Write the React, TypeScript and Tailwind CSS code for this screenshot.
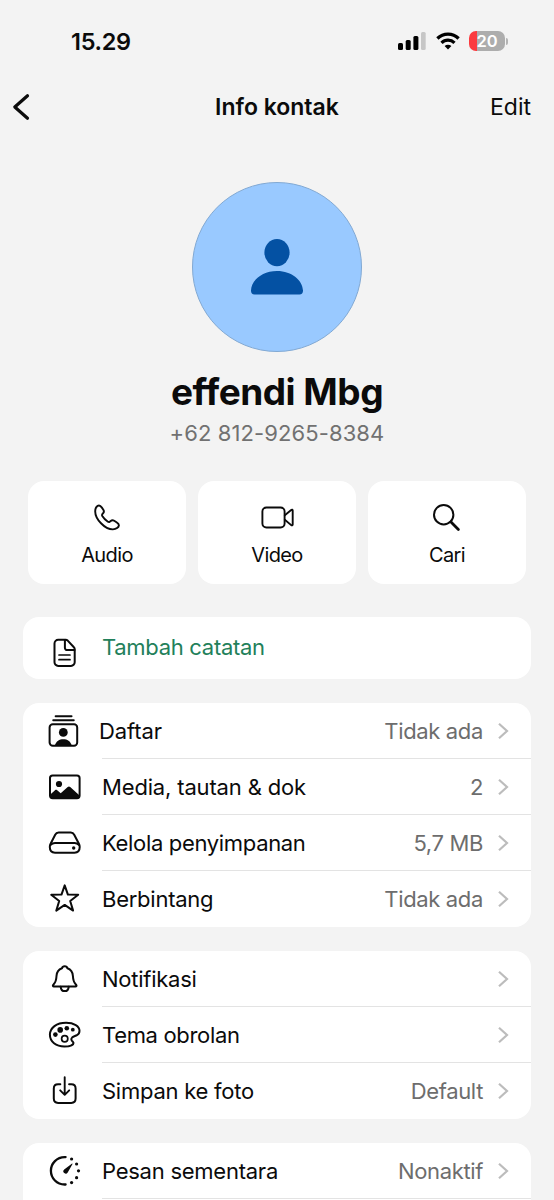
import type { ReactNode } from "react";

type Row = {
  label: string;
  value?: string;
  icon: ReactNode;
  labelClass?: string;
};

function Icon({ children, className = "" }: { children: ReactNode; className?: string }) {
  return (
    <svg
      className={`size-9 shrink-0 ${className}`}
      viewBox="0 0 36 36"
      fill="none"
      stroke="currentColor"
      strokeWidth={2}
      strokeLinecap="round"
      strokeLinejoin="round"
    >
      {children}
    </svg>
  );
}

const PhoneIcon = () => (
  <Icon>
    <path
      strokeWidth={1.9}
      d="M6.2 11.4C6.2 7.800 8 5.500 10 5.500c1.300 0 2 .8 2.900 2.100l1.400 2.100c.9 1.300.8 2.300-.1 3.400l-.9 1.100c-.4.6-.4 1.100 0 1.800 1.400 2.300 3.400 4.300 5.600 5.700.7.4 1.300.4 1.800 0l1-.8c1.100-.9 2.200-1 3.500-.2l2.300 1.500c1.700 1.100 2.500 1.900 2.400 3.100-.2 2-2.600 4.100-6 4.100C15.800 29.400 6.200 19 6.200 11.400Z"
    />
  </Icon>
);

const VideoIcon = () => (
  <Icon>
    <g strokeWidth={1.9}>
      <rect x="3.400" y="7.500" width="22.200" height="20" rx="4" />
      <path d="M25.800 15.200 32.200 9.900c.7-.6 1.500-.2 1.500.7v13.800c0 .9-.8 1.300-1.500.7l-6.400-5.300" />
    </g>
  </Icon>
);

const SearchIcon = () => (
  <Icon>
    <circle cx="14.700" cy="14.700" r="9.700" />
    <path strokeWidth={2.800} d="m22 22 7.400 7.400" />
  </Icon>
);

const NoteIcon = () => (
  <Icon className="mt-2.5">
    <path d="M12.200 4.800h7.500c.8 0 1.400.3 2 .8l6.200 6.700c.6.600.8 1.200.8 2v12.900a3.700 3.700 0 0 1-3.700 3.700H12.200a3.700 3.700 0 0 1-3.700-3.700V8.500a3.700 3.700 0 0 1 3.700-3.700Z" />
    <path d="M18.900 5v7.800a2.300 2.300 0 0 0 2.300 2.300h7.300" />
    <path strokeWidth={1.700} d="M13 20h11M13 24.700h11" />
  </Icon>
);

const ListIcon = () => (
  <Icon>
    <path strokeWidth={1.900} d="M9.600 3.300h16M7.200 7.200h20.600" />
    <rect x="3.600" y="11.200" width="27.600" height="21.600" rx="3.200" />
    <circle cx="17.300" cy="19.400" r="4.400" fill="currentColor" stroke="none" />
    <path d="M8.800 32.500c1.400-4.300 4.500-6.200 8.500-6.200s7.100 1.900 8.500 6.200Z" fill="currentColor" stroke="none" />
  </Icon>
);

const MediaIcon = () => (
  <Icon>
    <rect x="4" y="6.500" width="29.600" height="22.700" rx="2.600" />
    <circle cx="13" cy="15" r="3.100" fill="currentColor" stroke="none" />
    <path
      d="M4.300 25.600 9 21.200c.7-.6 1.500-.6 2.200 0l3.500 3 7-6.100c.8-.7 1.700-.7 2.500 0l9.100 8.100v1.300c0 1-.6 1.700-1.700 1.700H6c-1 0-1.700-.7-1.700-1.700Z"
      fill="currentColor"
      stroke="none"
    />
  </Icon>
);

const StorageIcon = () => (
  <Icon>
    <path d="M12.600 7.600h12.200c1.600 0 2.700.7 3.400 2.100l4.700 9.100c.5 1 .8 2 .8 3.300 0 3.600-1.700 5.600-5.200 5.600H9c-3.500 0-5.200-2-5.200-5.600 0-1.300.3-2.300.8-3.300l4.600-9.100c.7-1.400 1.800-2.100 3.400-2.100Z" />
    <path strokeWidth={1.800} d="M4.700 20c1-1.300 2.400-2 4.300-2h19.500c1.900 0 3.300.7 4.300 2" />
    <circle cx="27.700" cy="23" r="1.700" fill="currentColor" stroke="none" />
  </Icon>
);

const StarIcon = () => (
  <Icon>
    <path d="m18.700 4.400 3.200 9.200 10.300.2-8 6.200 2.900 9.600-8.400-5.700-8.400 5.700 2.900-9.600-8-6.200 10.300-.2Z" />
  </Icon>
);

const BellIcon = () => (
  <Icon>
    <path d="M18.700 5.200c1.500 0 2.400.8 2.700 2.100 3.500 1.200 5.300 4 5.500 7.700.2 4.200.7 6.100 2.800 8.300l.6.700c.5.700.1 1.400-.7 1.400H7.800c-.8 0-1.200-.7-.7-1.400l.6-.7c2.100-2.200 2.600-4.100 2.800-8.300.2-3.700 2-6.500 5.500-7.700.3-1.300 1.200-2.100 2.700-2.100Z" />
    <path d="M14.700 25.800c.2 2.500 1.700 4.300 4 4.300s3.800-1.800 4-4.300" />
  </Icon>
);

const PaletteIcon = () => (
  <Icon>
    <path d="M26 20.600c1.100-1.400 3.200-1.500 5-2.500 1.800-.9 2.500-2.400 2.500-4.300 0-4.700-5.500-8-13.400-8C10.600 5.800 3.900 10.600 3.900 17.800c0 6.900 6.100 11.700 14.500 11.700 4.900 0 9.100-1.300 9.100-3.400 0-1.100-1.100-1.500-1.800-2.600-.6-1-.5-2.100.3-2.900Z" />
    <circle cx="18.700" cy="21.700" r="3.100" strokeWidth={1.700} />
    <g fill="currentColor" stroke="none">
      <circle cx="9.400" cy="17.600" r="2.300" />
      <circle cx="14.200" cy="12.900" r="2.800" />
      <circle cx="20.800" cy="11.200" r="2.300" />
      <circle cx="26.800" cy="12.700" r="1.900" />
    </g>
  </Icon>
);

const SaveIcon = () => (
  <Icon>
    <path d="M14.300 11.300h-2.200c-3 0-4.300 1.300-4.300 4.300v10c0 3 1.300 4.300 4.300 4.300h13.200c3 0 4.300-1.300 4.300-4.300v-10c0-3-1.300-4.300-4.300-4.300h-2.200" />
    <path strokeWidth={1.900} d="M18.700 4.300v17.200M14.200 17.300l4.500 4.500 4.500-4.500" />
  </Icon>
);

const TimerIcon = () => (
  <Icon>
    <path strokeWidth={2.300} d="M19.600 4.100h-1a13.700 13.700 0 0 0 0 27.400h1" />
    <path d="M25.800 10.700c.4-.3.9.2.600.6l-4.700 8.100a2.300 2.300 0 1 1-3.500-2.900Z" fill="currentColor" stroke="none" />
    <g fill="currentColor" stroke="none">
      <circle cx="25.600" cy="6" r="1.600" />
      <circle cx="30.600" cy="11" r="1.600" />
      <circle cx="32.500" cy="17.800" r="1.600" />
      <circle cx="30.600" cy="24.700" r="1.600" />
      <circle cx="25.600" cy="29.600" r="1.600" />
    </g>
  </Icon>
);

const ACTIONS = [
  { label: "Audio", icon: <PhoneIcon /> },
  { label: "Video", icon: <VideoIcon /> },
  { label: "Cari", icon: <SearchIcon /> },
];

const MEDIA_ROWS: Row[] = [
  { label: "Daftar", value: "Tidak ada", icon: <ListIcon />, labelClass: "-ml-[3px] tracking-[-0.1px]" },
  { label: "Media, tautan & dok", value: "2", icon: <MediaIcon />, labelClass: "tracking-[-0.16px]" },
  { label: "Kelola penyimpanan", value: "5,7 MB", icon: <StorageIcon />, labelClass: "tracking-[-0.33px]" },
  { label: "Berbintang", value: "Tidak ada", icon: <StarIcon /> },
];

const CHAT_ROWS: Row[] = [
  { label: "Notifikasi", icon: <BellIcon /> },
  { label: "Tema obrolan", icon: <PaletteIcon />, labelClass: "tracking-[-0.33px]" },
  { label: "Simpan ke foto", value: "Default", icon: <SaveIcon /> },
];

const PRIVACY_ROWS: Row[] = [
  { label: "Pesan sementara", value: "Nonaktif", icon: <TimerIcon /> },
  { label: "", icon: null },
];

function StatusBar() {
  return (
    <div className="flex h-[82px] items-center justify-between pr-[46px] pl-[71px]">
      <span className="pt-0.5 text-[23.5px] font-semibold tracking-[-0.3px]">15.29</span>
      <div className="flex items-center">
        <svg className="h-[18px] w-7" viewBox="0 0 28 18" fill="#000">
          <rect x="0" y="11" width="5" height="7" rx="1.500" />
          <rect x="7.700" y="8" width="5" height="10" rx="1.500" />
          <rect x="15.400" y="4" width="5" height="14" rx="1.500" />
          <rect x="23" y="0" width="4.700" height="18" rx="1.500" fill="#c6c6c6" />
        </svg>
        <svg className="ml-[10px] h-[18px] w-6" viewBox="0 0 24 18" fill="none" stroke="#000">
          <path strokeWidth={3.300} d="M1.400 6.500a15.200 15.200 0 0 1 21.200 0" />
          <path strokeWidth={3.200} d="M5.500 10.800a9.300 9.300 0 0 1 13 0" />
          <path d="M8.600 14a4.900 4.900 0 0 1 6.800 0L12 17.500Z" fill="#000" stroke="none" />
        </svg>
        <div className="ml-[9px] flex h-5 w-9 items-center justify-center overflow-hidden rounded-[7px] bg-linear-to-r from-[#fb3b3f] from-[22%] to-[#adadad] to-[22%] text-[16.5px] font-semibold text-white">
          20
        </div>
        <div className="ml-px h-[7px] w-[2px] rounded-r-full bg-[#b4b4b4]" />
      </div>
    </div>
  );
}

function Card({ rows }: { rows: Row[] }) {
  return (
    <div className="mx-[23px] mb-6 overflow-hidden rounded-2xl bg-white">
      {rows.map((row, i) => (
        <div key={i} className="flex h-14 items-center pl-[23px]">
          {row.icon}
          <div
            className={`ml-5 flex h-full flex-1 items-center border-[#e3e3e3] ${i < rows.length - 1 ? "border-b" : ""}`}
          >
            <span className={`whitespace-nowrap ${row.labelClass ?? "tracking-[-0.25px]"}`}>{row.label}</span>
            <span className="ml-auto tracking-[-0.35px] whitespace-nowrap text-[#6d6d6d]">{row.value}</span>
            <svg
              className="mr-[21px] ml-[13px] h-5 w-3.5"
              viewBox="0 0 14 20"
              fill="none"
              stroke="#bcbcbc"
              strokeWidth={2.200}
            >
              <path d="m3 2.700 8 7.300-8 7.300" />
            </svg>
          </div>
        </div>
      ))}
    </div>
  );
}

export default function App() {
  return (
    <div className="h-[1200px] w-[554px] overflow-hidden bg-[#f3f3f3] font-['Inter',sans-serif] text-[22px] leading-none text-[#0b0b0b]">
      <StatusBar />

      <header className="grid h-[50px] grid-cols-3 items-center pr-[23px] pl-3">
        <svg className="h-7 w-5" viewBox="0 0 20 28" fill="none" stroke="currentColor" strokeWidth={3.200} strokeLinecap="round" strokeLinejoin="round">
          <path d="M15.500 2.800 2.800 14l12.700 11.200" />
        </svg>
        <h1 className="ml-[11px] text-center text-[23px] font-semibold whitespace-nowrap">Info kontak</h1>
        <span className="text-right text-[23px]">Edit</span>
      </header>

      <section className="flex flex-col items-center pt-[50px]">
        <div className="flex size-[170px] items-center justify-center rounded-full border border-[#82a9d3] bg-[#99c9ff]">
          <svg className="h-14 w-[54px]" viewBox="0 0 54 56" fill="#0451a3">
            <ellipse cx="27" cy="13.700" rx="12.600" ry="13.600" />
            <path d="M1 51.500C1.300 41.600 12 32 27 32s25.700 9.600 26 19.500c.1 2.600-1.100 3.900-3.500 3.900h-45c-2.400 0-3.600-1.300-3.500-3.900Z" />
          </svg>
        </div>
        <h2 className="mt-[21px] text-[37px] font-bold tracking-[-0.5px] whitespace-nowrap">effendi Mbg</h2>
        <p className="mt-3 text-[22px] tracking-[0.1px] whitespace-nowrap text-[#717171]">+62 812-9265-8384</p>
      </section>

      <div className="mx-7 mt-[37px] grid grid-cols-3 gap-3">
        {ACTIONS.map((action) => (
          <div key={action.label} className="flex h-[103px] flex-col items-center rounded-2xl bg-white pt-[19px]">
            {action.icon}
            <span className="mt-[9px] text-[20px] tracking-[-0.6px]">{action.label}</span>
          </div>
        ))}
      </div>

      <div className="mx-[23px] mt-[33px] mb-6 flex h-[62px] items-center rounded-2xl bg-white pl-[23px]">
        <NoteIcon />
        <span className="mb-0.5 ml-5 tracking-[-0.3px] whitespace-nowrap text-[#22805a]">Tambah catatan</span>
      </div>

      <Card rows={MEDIA_ROWS} />
      <Card rows={CHAT_ROWS} />
      <Card rows={PRIVACY_ROWS} />
    </div>
  );
}
